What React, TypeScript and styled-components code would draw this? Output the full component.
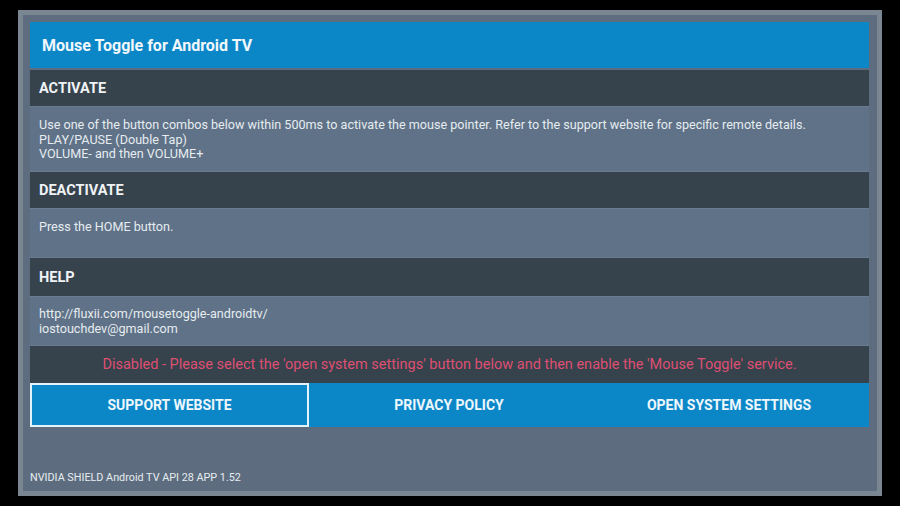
import React from "react";
import styled, { createGlobalStyle } from "styled-components";

const Global = createGlobalStyle`
  html, body { margin: 0; padding: 0; background: #000; }
  body { font-family: Roboto, "Noto Sans", "Liberation Sans", sans-serif; }
  * { box-sizing: border-box; }
`;

const Screen = styled.div`
  width: 900px;
  height: 506px;
  background: #000;
  padding: 10px 18px;
`;

const Frame = styled.div`
  width: 864px;
  height: 486px;
  border: 5px solid #7a8792;
  background: #5d6c7e;
  padding: 7px 8px 7px 7px;
  display: flex;
  flex-direction: column;
`;

const Header = styled.div`
  height: 46px;
  background: #0b87c8;
  color: #f2f8fb;
  font-size: 16px;
  font-weight: 700;
  display: flex;
  align-items: center;
  padding-left: 12px;
  margin-bottom: 2px;
`;

const SectionBar = styled.div<{ $h: number }>`
  height: ${(p) => p.$h}px;
  background: #36424c;
  color: #f0f3f5;
  font-size: 14.5px;
  font-weight: 700;
  display: flex;
  align-items: center;
  padding-left: 9px;
`;

const Body = styled.div<{ $h: number; $pt: number }>`
  height: ${(p) => p.$h}px;
  background: #5f7287;
  border-top: 1px solid #6a7d90;
  border-bottom: 1px solid #6a7d90;
  color: #e6ecf0;
  font-size: 12.6px;
  line-height: 14.5px;
  padding: ${(p) => p.$pt}px 9px 0;
`;

const Status = styled.div`
  height: 37px;
  background: #36424c;
  color: #de4f72;
  font-size: 14.5px;
  display: flex;
  align-items: center;
  justify-content: center;
`;

const Buttons = styled.div`
  display: grid;
  grid-template-columns: 279px 280px 280px;
  height: 44px;
`;

const Btn = styled.div<{ $focused?: boolean }>`
  background: #0b87c8;
  color: #eef7fc;
  font-size: 14px;
  font-weight: 700;
  display: flex;
  align-items: center;
  justify-content: center;
  border: 2px solid ${(p) => (p.$focused ? "#e4f3fb" : "transparent")};
`;

const Spacer = styled.div`
  flex: 1;
`;

const Footer = styled.div`
  color: #e6ecf0;
  font-size: 10.8px;
  padding-bottom: 0;
`;

export default function App() {
  return (
    <>
      <Global />
      <Screen>
        <Frame>
          <Header>Mouse Toggle for Android TV</Header>
          <SectionBar $h={36}>ACTIVATE</SectionBar>
          <Body $h={66} $pt={11}>
            Use one of the button combos below within 500ms to activate the mouse pointer. Refer to the support website for specific remote details.
            <br />
            PLAY/PAUSE (Double Tap)
            <br />
            VOLUME- and then VOLUME+
          </Body>
          <SectionBar $h={36}>DEACTIVATE</SectionBar>
          <Body $h={50} $pt={11}>Press the HOME button.</Body>
          <SectionBar $h={38}>HELP</SectionBar>
          <Body $h={50} $pt={10}>
            http://fluxii.com/mousetoggle-androidtv/
            <br />
            iostouchdev@gmail.com
          </Body>
          <Status>
            Disabled - Please select the 'open system settings' button below and then enable the 'Mouse Toggle' service.
          </Status>
          <Buttons>
            <Btn $focused>SUPPORT WEBSITE</Btn>
            <Btn>PRIVACY POLICY</Btn>
            <Btn>OPEN SYSTEM SETTINGS</Btn>
          </Buttons>
          <Spacer />
          <Footer>NVIDIA SHIELD Android TV API 28 APP 1.52</Footer>
        </Frame>
      </Screen>
    </>
  );
}
